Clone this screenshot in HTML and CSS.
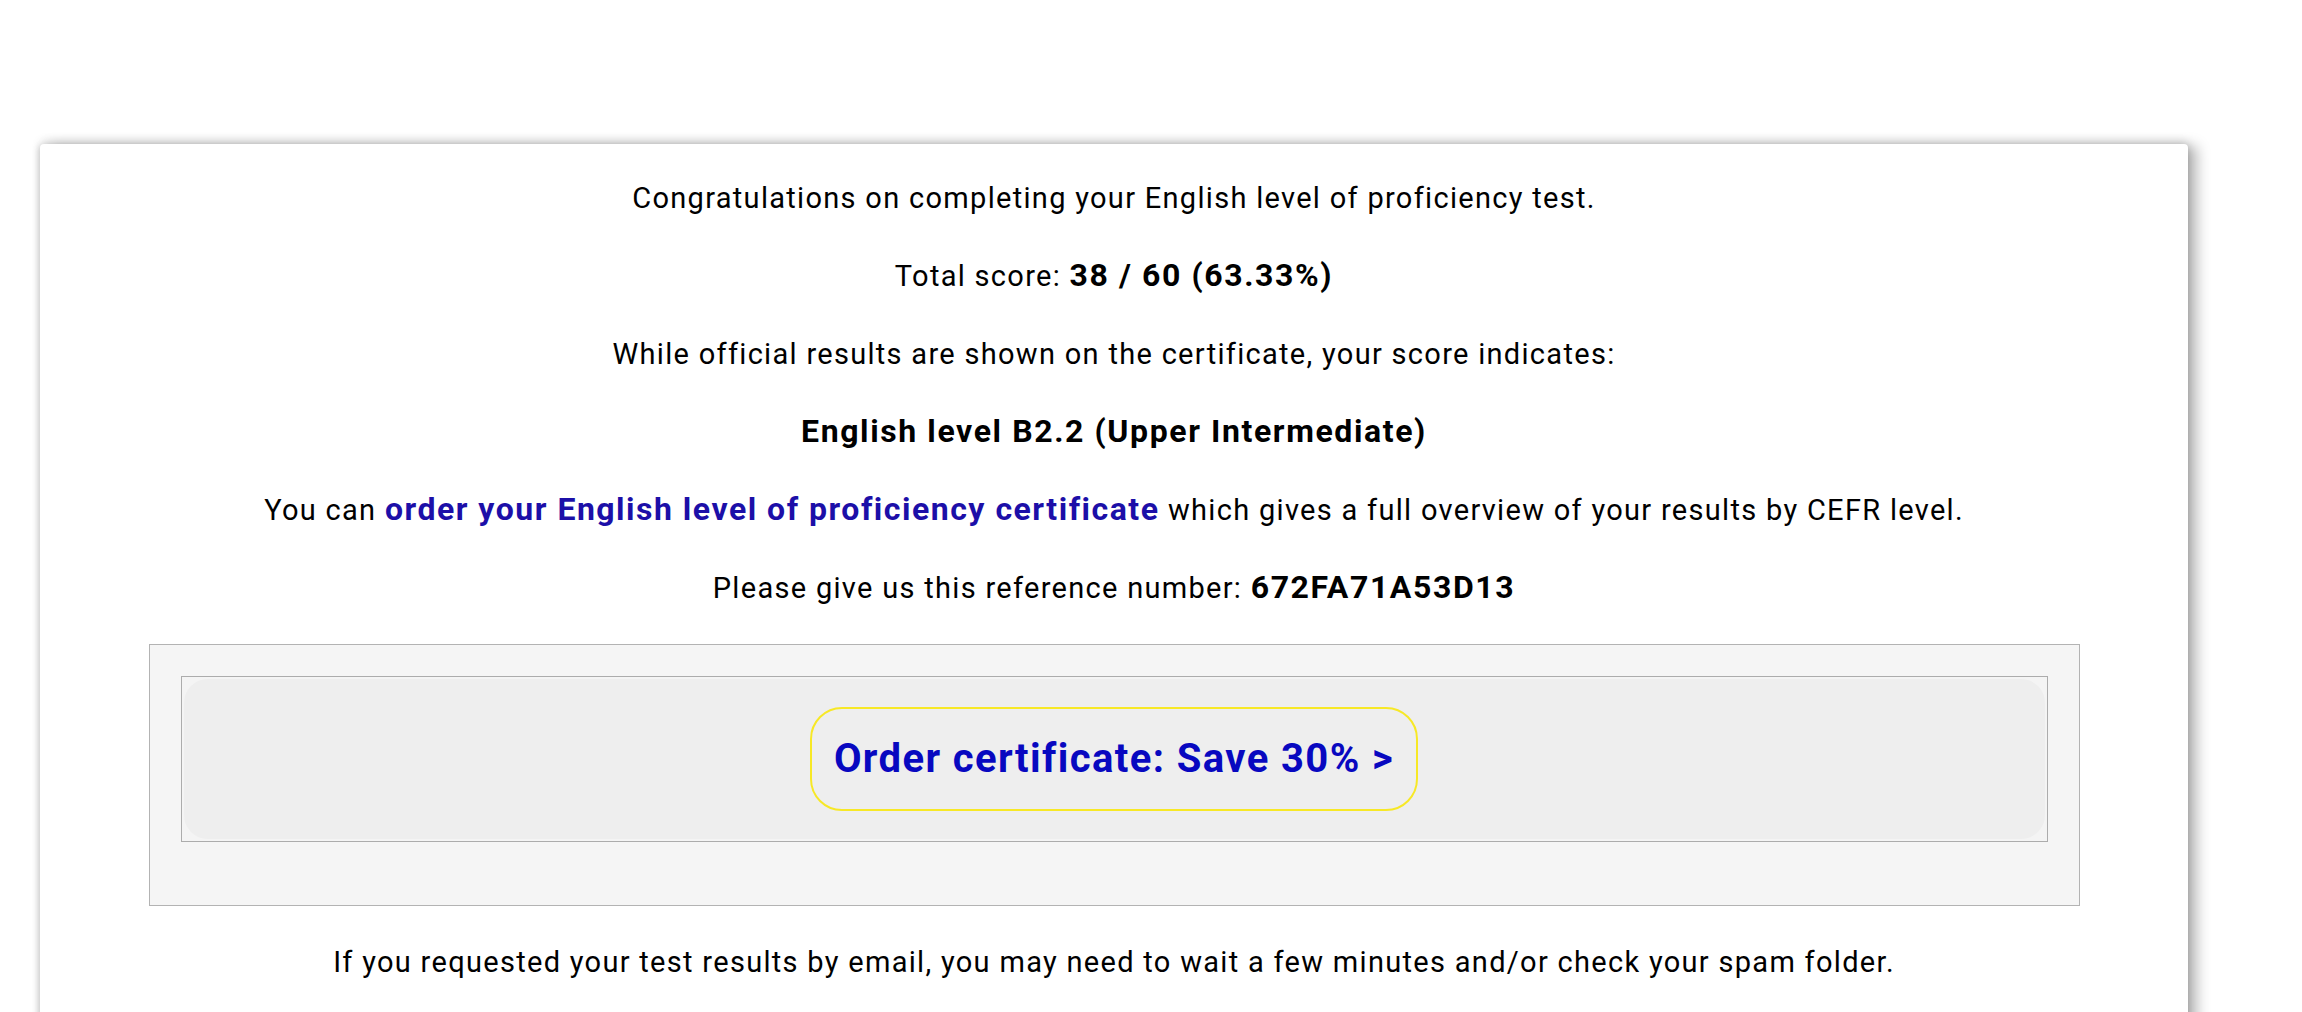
FILE: index.html
```html
<!DOCTYPE html>
<html lang="en">
<head>
<meta charset="utf-8">
<title>Test results</title>
<link rel="stylesheet" href="styles.css">
</head>
<body>
<main class="card">
  <p class="line">Congratulations on completing your English level of proficiency test.</p>
  <p class="line">Total score: <strong>38 / 60 (63.33%)</strong></p>
  <p class="line">While official results are shown on the certificate, your score indicates:</p>
  <p class="line"><strong>English level B2.2 (Upper Intermediate)</strong></p>
  <p class="line">You can <a class="link" href="#">order your English level of proficiency certificate</a> which gives a full overview of your results by CEFR level.</p>
  <p class="line">Please give us this reference number: <strong>672FA71A53D13</strong></p>
  <section class="promo">
    <div class="promo-frame">
      <div class="promo-inner">
        <a class="order-btn" href="#">Order certificate: Save 30% &gt;</a>
      </div>
    </div>
  </section>
  <p class="line">If you requested your test results by email, you may need to wait a few minutes and/or check your spam folder.</p>
</main>
</body>
</html>
```
FILE: styles.css
```css
html, body {
  margin: 0;
  padding: 0;
  background: #ffffff;
}
body {
  font-family: Roboto, "Liberation Sans", Arial, sans-serif;
  color: #000;
  padding-top: 144px;
  height: 868px;
  overflow: hidden;
}
.card {
  margin-left: 40px;
  width: 2148px;
  min-height: 900px;
  box-sizing: border-box;
  background: #fff;
  border-radius: 4px;
  box-shadow: 0 -3px 10px rgba(0,0,0,0.12), 9px 2px 14px rgba(0,0,0,0.28), -2px 2px 6px rgba(0,0,0,0.12);
  padding: 32px 0 0;
  display: flex;
  flex-direction: column;
  align-items: center;
  gap: 34px;
  text-align: center;
}
.line {
  margin: 0;
  font-size: 29px;
  line-height: 44px;
  letter-spacing: 1.3px;
}
.line strong {
  font-weight: 700;
  font-size: 32px;
  line-height: 1;
  letter-spacing: 1.6px;
}
.link {
  color: #1c0fa8;
  font-weight: 700;
  font-size: 32px;
  line-height: 1;
  letter-spacing: 1.5px;
  text-decoration: none;
}
.promo {
  width: 1931px;
  box-sizing: border-box;
  background: #f5f5f5;
  border: 1.5px solid #b3b3b3;
  padding: 31px 31px 63px;
}
.promo-frame {
  border: 1.5px solid #acacac;
  background: #f4f4f4;
  padding: 2px;
}
.promo-inner {
  background: #eeeeee;
  border-radius: 24px;
  height: 160px;
  display: flex;
  align-items: center;
  justify-content: center;
}
.order-btn {
  display: inline-block;
  border: 2px solid #f7e826;
  border-radius: 32px;
  padding: 0 22px;
  height: 104px;
  box-sizing: border-box;
  line-height: 100px;
  font-size: 40px;
  font-weight: 700;
  letter-spacing: 1.4px;
  color: #0808c0;
  text-decoration: none;
}
```
